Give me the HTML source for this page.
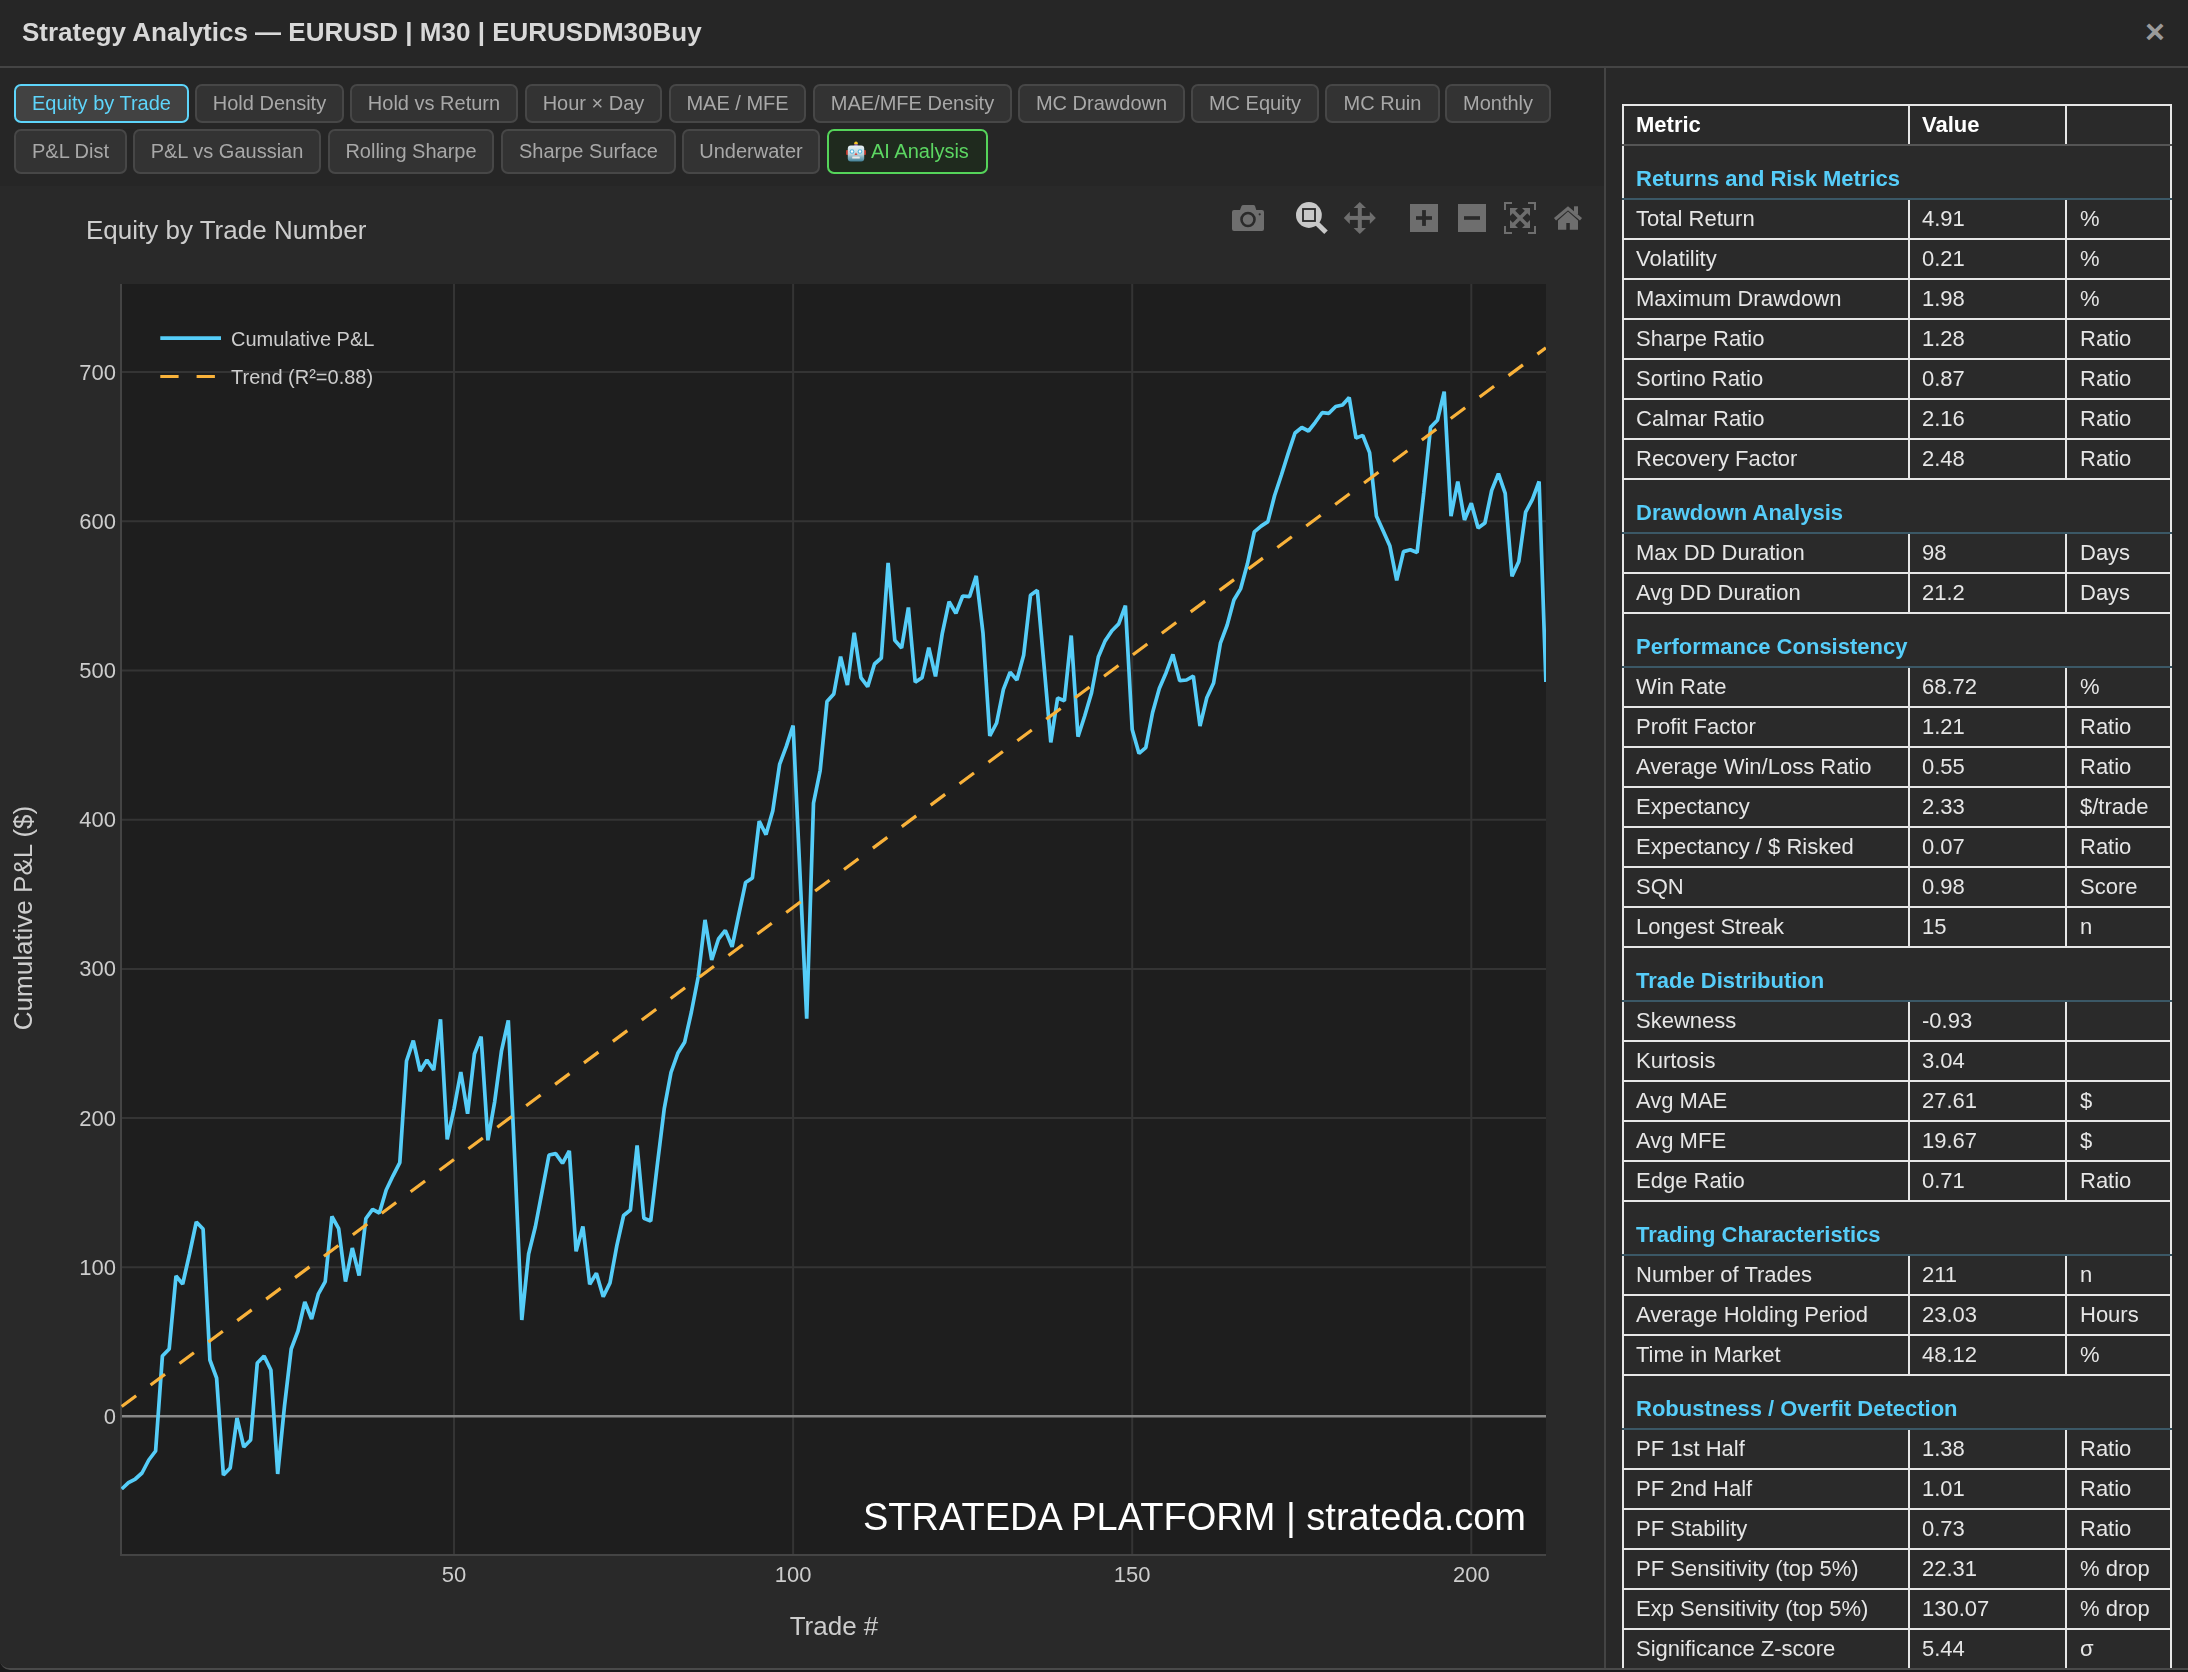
<!DOCTYPE html><html><head><meta charset="utf-8"><style>
*{margin:0;padding:0;box-sizing:border-box}
html,body{width:2188px;height:1672px;overflow:hidden;background:#1a1a1a;font-family:"Liberation Sans", sans-serif}
.modal{position:absolute;left:0;top:0;width:2188px;height:1670px;background:#262626;border-radius:0 0 0 10px;border-bottom:2px solid #4a4a4a;overflow:hidden}
.hdr{position:absolute;left:0;top:0;width:2188px;height:66px;background:#262626}
.hdr .t{will-change:transform;position:absolute;left:22px;top:17px;font-size:26px;font-weight:bold;color:#d8d8d8;white-space:nowrap;line-height:30px}
.hdr .x{position:absolute;left:2143px;top:16px;width:24px;height:30px;color:#9a9a9a;font-size:34px;line-height:30px;font-weight:bold;text-align:center}
.hline{position:absolute;left:0;top:66px;width:2188px;height:2px;background:#444}
.vline{position:absolute;left:1604px;top:68px;width:2px;height:1610px;background:#444}
.tab{will-change:transform;position:absolute;height:39px;border:2px solid #474747;border-radius:7px;background:#333;color:#a8a8a8;font-size:20px;line-height:35px;text-align:center;white-space:nowrap}
.tab.r2{height:45px;line-height:41px}
.tab.act{border-color:#5ed5fb;background:#424242;color:#5ed5fb}
.tab.ai{border-color:#55d45a;background:#1f2a1e;color:#5cd662}
.paper{position:absolute;left:0;top:186px;width:1604px;height:1483px;background:#292929}
.abs{position:absolute;white-space:nowrap;will-change:transform}
</style></head><body><div class="modal">
<div class="hdr"><div class="t">Strategy Analytics — EURUSD | M30 | EURUSDM30Buy</div><div class="x">×</div></div>
<div class="hline"></div><div class="vline"></div>
<div class="tab act" style="left:14px;top:84px;width:175px">Equity by Trade</div>
<div class="tab" style="left:195px;top:84px;width:149px">Hold Density</div>
<div class="tab" style="left:350px;top:84px;width:168px">Hold vs Return</div>
<div class="tab" style="left:525px;top:84px;width:137px">Hour × Day</div>
<div class="tab" style="left:669px;top:84px;width:137px">MAE / MFE</div>
<div class="tab" style="left:813px;top:84px;width:199px">MAE/MFE Density</div>
<div class="tab" style="left:1018px;top:84px;width:167px">MC Drawdown</div>
<div class="tab" style="left:1191px;top:84px;width:128px">MC Equity</div>
<div class="tab" style="left:1325px;top:84px;width:115px">MC Ruin</div>
<div class="tab" style="left:1445px;top:84px;width:106px">Monthly</div>
<div class="tab r2" style="left:14px;top:129px;width:113px">P&amp;L Dist</div>
<div class="tab r2" style="left:133px;top:129px;width:188px">P&amp;L vs Gaussian</div>
<div class="tab r2" style="left:328px;top:129px;width:166px">Rolling Sharpe</div>
<div class="tab r2" style="left:501px;top:129px;width:175px">Sharpe Surface</div>
<div class="tab r2" style="left:682px;top:129px;width:138px">Underwater</div>
<div class="tab r2 ai" style="left:827px;top:129px;width:161px;text-align:left;padding-left:42px"><svg width="20" height="21" viewBox="0 0 20 21" style="position:absolute;left:17px;top:10px"><circle cx="10" cy="2.2" r="1.8" fill="#f3c623"/><rect x="8.3" y="3.3" width="3.4" height="2.2" fill="#7a4fb0"/><rect x="0" y="9" width="2.5" height="5" rx="1" fill="#c0392b"/><rect x="17.5" y="9" width="2.5" height="5" rx="1" fill="#c0392b"/><defs><linearGradient id="rg" x1="0" y1="0" x2="0" y2="1"><stop offset="0" stop-color="#e8f2f5"/><stop offset="0.55" stop-color="#b7d3dc"/><stop offset="1" stop-color="#3f7f96"/></linearGradient></defs><rect x="1.8" y="4.5" width="16.4" height="16" rx="3" fill="url(#rg)"/><circle cx="6" cy="10.5" r="2.3" fill="#57b9e0"/><circle cx="14" cy="10.5" r="2.3" fill="#57b9e0"/><circle cx="6" cy="10.5" r="1.2" fill="#fff"/><circle cx="14" cy="10.5" r="1.2" fill="#fff"/><path d="M10 11.5 L11.5 14 L8.5 14Z" fill="#e0463a"/><rect x="6.2" y="15.5" width="7.6" height="2" rx="0.6" fill="#e8e8e8"/></svg>AI Analysis</div>
<div class="paper"></div>
<svg class="abs" style="left:0;top:0" width="1604" height="1669" viewBox="0 0 1604 1669"><rect x="121" y="284" width="1425" height="1270" fill="#1e1e1e"/><line x1="121" x2="1546" y1="1267.3" y2="1267.3" stroke="#343434" stroke-width="2"/><line x1="121" x2="1546" y1="1118.1" y2="1118.1" stroke="#343434" stroke-width="2"/><line x1="121" x2="1546" y1="968.9" y2="968.9" stroke="#343434" stroke-width="2"/><line x1="121" x2="1546" y1="819.7" y2="819.7" stroke="#343434" stroke-width="2"/><line x1="121" x2="1546" y1="670.5" y2="670.5" stroke="#343434" stroke-width="2"/><line x1="121" x2="1546" y1="521.2" y2="521.2" stroke="#343434" stroke-width="2"/><line x1="121" x2="1546" y1="372.0" y2="372.0" stroke="#343434" stroke-width="2"/><line x1="454.0" x2="454.0" y1="284" y2="1554" stroke="#343434" stroke-width="2"/><line x1="793.1" x2="793.1" y1="284" y2="1554" stroke="#343434" stroke-width="2"/><line x1="1132.2" x2="1132.2" y1="284" y2="1554" stroke="#343434" stroke-width="2"/><line x1="1471.3" x2="1471.3" y1="284" y2="1554" stroke="#343434" stroke-width="2"/><line x1="121" x2="1546" y1="1416.3" y2="1416.3" stroke="#888" stroke-width="2.6"/><line x1="121" x2="121" y1="284" y2="1555" stroke="#444" stroke-width="2"/><line x1="120" x2="1546" y1="1555" y2="1555" stroke="#444" stroke-width="2"/><defs><clipPath id="pc"><rect x="121" y="284" width="1425" height="1270"/></clipPath></defs><g clip-path="url(#pc)"><path d="M121.7 1489.0 L128.5 1482.7 L135.3 1479.0 L142.0 1473.0 L148.8 1460.0 L155.6 1451.0 L162.4 1356.0 L169.2 1349.0 L176.0 1276.0 L182.7 1284.0 L189.5 1254.0 L196.3 1222.0 L203.1 1229.0 L209.9 1360.0 L216.6 1378.0 L223.4 1475.0 L230.2 1468.0 L237.0 1418.0 L243.8 1447.0 L250.6 1440.0 L257.3 1363.0 L264.1 1356.0 L270.9 1370.0 L277.7 1474.0 L284.5 1406.0 L291.2 1349.0 L298.0 1331.0 L304.8 1302.0 L311.6 1319.0 L318.4 1293.8 L325.2 1281.6 L331.9 1216.5 L338.7 1228.7 L345.5 1281.6 L352.3 1248.0 L359.1 1275.5 L365.9 1218.5 L372.6 1209.4 L379.4 1213.0 L386.2 1190.0 L393.0 1175.8 L399.8 1162.6 L406.5 1061.0 L413.3 1040.7 L420.1 1071.0 L426.9 1060.0 L433.7 1070.0 L440.5 1019.3 L447.2 1139.3 L454.0 1108.8 L460.8 1072.0 L467.6 1113.8 L474.4 1054.0 L481.1 1036.6 L487.9 1140.3 L494.7 1101.6 L501.5 1050.8 L508.3 1020.3 L515.1 1167.0 L521.8 1320.0 L528.6 1254.0 L535.4 1226.5 L542.2 1190.8 L549.0 1155.0 L555.7 1153.6 L562.5 1163.3 L569.3 1150.9 L576.1 1251.3 L582.9 1226.5 L589.7 1284.3 L596.4 1273.3 L603.2 1296.7 L610.0 1282.9 L616.8 1245.8 L623.6 1215.5 L630.4 1210.0 L637.1 1145.4 L643.9 1218.3 L650.7 1221.0 L657.5 1163.3 L664.3 1108.3 L671.0 1072.5 L677.8 1053.3 L684.6 1042.3 L691.4 1012.0 L698.2 977.0 L705.0 919.9 L711.7 960.0 L718.5 939.0 L725.3 930.4 L732.1 946.8 L738.9 914.0 L745.6 882.5 L752.4 878.0 L759.2 821.2 L766.0 834.6 L772.8 810.7 L779.6 764.4 L786.3 746.4 L793.1 725.5 L799.9 872.0 L806.7 1018.6 L813.5 803.2 L820.2 770.3 L827.0 701.5 L833.8 694.0 L840.6 656.7 L847.4 685.1 L854.2 632.7 L860.9 677.6 L867.7 686.6 L874.5 664.0 L881.3 658.0 L888.1 563.0 L894.8 640.3 L901.6 648.0 L908.4 607.5 L915.2 682.1 L922.0 677.8 L928.8 647.7 L935.5 676.4 L942.3 633.3 L949.1 601.7 L955.9 613.2 L962.7 596.0 L969.5 596.7 L976.2 575.9 L983.0 633.3 L989.8 736.0 L996.6 723.0 L1003.4 689.3 L1010.1 672.1 L1016.9 680.0 L1023.7 654.9 L1030.5 595.3 L1037.3 590.3 L1044.1 666.3 L1050.8 742.4 L1057.6 698.0 L1064.4 700.8 L1071.2 635.5 L1078.0 736.7 L1084.7 716.0 L1091.5 693.0 L1098.3 657.0 L1105.1 640.9 L1111.9 630.7 L1118.7 623.9 L1125.4 605.7 L1132.2 729.5 L1139.0 753.4 L1145.8 747.7 L1152.6 712.5 L1159.3 688.6 L1166.1 672.7 L1172.9 654.5 L1179.7 680.7 L1186.5 680.0 L1193.3 676.1 L1200.0 726.1 L1206.8 697.7 L1213.6 683.0 L1220.4 643.2 L1227.2 625.0 L1233.9 600.0 L1240.7 588.6 L1247.5 563.6 L1254.3 531.8 L1261.1 526.1 L1267.9 521.6 L1274.6 495.5 L1281.4 475.0 L1288.2 453.4 L1295.0 433.0 L1301.8 427.5 L1308.5 431.0 L1315.3 422.3 L1322.1 412.7 L1328.9 413.3 L1335.7 406.5 L1342.5 405.0 L1349.2 397.5 L1356.0 438.1 L1362.8 435.4 L1369.6 452.6 L1376.4 515.9 L1383.2 531.0 L1389.9 546.1 L1396.7 580.4 L1403.5 551.6 L1410.3 549.7 L1417.1 552.5 L1423.8 492.4 L1430.6 427.3 L1437.4 420.3 L1444.2 391.7 L1451.0 516.1 L1457.8 481.5 L1464.5 520.0 L1471.3 503.3 L1478.1 528.0 L1484.9 523.0 L1491.7 490.4 L1498.4 473.7 L1505.2 493.4 L1512.0 576.3 L1518.8 561.5 L1525.6 512.2 L1532.4 499.3 L1539.1 481.5 L1545.9 682.0" fill="none" stroke="#55cdf8" stroke-width="3.7" stroke-linejoin="bevel"/><line x1="121.7" y1="1406.5" x2="1545.9" y2="347.8" stroke="#f9b23a" stroke-width="3.2" stroke-dasharray="18 18"/></g><text x="116" y="1424.0" text-anchor="end" font-size="22" fill="#cdcdcd" font-family='"Liberation Sans", sans-serif'>0</text><text x="116" y="1274.8" text-anchor="end" font-size="22" fill="#cdcdcd" font-family='"Liberation Sans", sans-serif'>100</text><text x="116" y="1125.6" text-anchor="end" font-size="22" fill="#cdcdcd" font-family='"Liberation Sans", sans-serif'>200</text><text x="116" y="976.4" text-anchor="end" font-size="22" fill="#cdcdcd" font-family='"Liberation Sans", sans-serif'>300</text><text x="116" y="827.2" text-anchor="end" font-size="22" fill="#cdcdcd" font-family='"Liberation Sans", sans-serif'>400</text><text x="116" y="678.0" text-anchor="end" font-size="22" fill="#cdcdcd" font-family='"Liberation Sans", sans-serif'>500</text><text x="116" y="528.7" text-anchor="end" font-size="22" fill="#cdcdcd" font-family='"Liberation Sans", sans-serif'>600</text><text x="116" y="379.5" text-anchor="end" font-size="22" fill="#cdcdcd" font-family='"Liberation Sans", sans-serif'>700</text><text x="454.0" y="1581.5" text-anchor="middle" font-size="22" fill="#cdcdcd" font-family='"Liberation Sans", sans-serif'>50</text><text x="793.1" y="1581.5" text-anchor="middle" font-size="22" fill="#cdcdcd" font-family='"Liberation Sans", sans-serif'>100</text><text x="1132.2" y="1581.5" text-anchor="middle" font-size="22" fill="#cdcdcd" font-family='"Liberation Sans", sans-serif'>150</text><text x="1471.3" y="1581.5" text-anchor="middle" font-size="22" fill="#cdcdcd" font-family='"Liberation Sans", sans-serif'>200</text><text x="834" y="1635" text-anchor="middle" font-size="26" fill="#cdcdcd" font-family='"Liberation Sans", sans-serif'>Trade #</text><text transform="translate(32 918) rotate(-90)" text-anchor="middle" font-size="26" fill="#cdcdcd" font-family='"Liberation Sans", sans-serif'>Cumulative P&amp;L ($)</text><text x="86" y="239" font-size="26" fill="#cdcdcd" font-family='"Liberation Sans", sans-serif'>Equity by Trade Number</text><line x1="160.3" x2="221" y1="338.2" y2="338.2" stroke="#55cdf8" stroke-width="3.7" stroke-linejoin="bevel"/><line x1="160.3" x2="221" y1="376.5" y2="376.5" stroke="#f9b23a" stroke-width="3.2" stroke-dasharray="18.3 18"/><text x="231" y="346" font-size="20" fill="#cdcdcd" font-family='"Liberation Sans", sans-serif'>Cumulative P&amp;L</text><text x="231" y="384" font-size="20" fill="#cdcdcd" font-family='"Liberation Sans", sans-serif'>Trend (R²=0.88)</text><text x="1526" y="1530" text-anchor="end" font-size="38" fill="#ffffff" font-family='"Liberation Sans", sans-serif'>STRATEDA PLATFORM | strateda.com</text><g fill="#6e6e6e"><path d="M1241.5 206 Q1242 205 1243.5 205 L1253.5 205 Q1254.5 205 1255 206 L1256.3 210 L1262 210 Q1264 210 1264 212 L1264 229 Q1264 231 1262 231 L1234 231 Q1232 231 1232 229 L1232 212 Q1232 210 1234 210 L1240 210 Z"/></g><circle cx="1248" cy="219.5" r="6.5" fill="none" stroke="#2a2a2a" stroke-width="2.6"/><circle cx="1259.7" cy="214.3" r="1.1" fill="#2a2a2a"/><circle cx="1308.9" cy="215" r="12.9" fill="#c8c8c8"/><line x1="1316" y1="222.5" x2="1326" y2="232.2" stroke="#c8c8c8" stroke-width="5"/><rect x="1303" y="209" width="12" height="12" fill="#c8c8c8" stroke="#262626" stroke-width="1.8"/><g fill="#6e6e6e"><rect x="1357.8" y="206" width="4" height="24"/><rect x="1348" y="215.9" width="24" height="4"/><path d="M1359.8 202 L1366 208 L1353.6 208 Z"/><path d="M1359.8 234 L1366 228 L1353.6 228 Z"/><path d="M1343.8 217.9 L1349.8 211.7 L1349.8 224.1 Z"/><path d="M1375.8 217.9 L1369.8 211.7 L1369.8 224.1 Z"/></g><rect x="1410" y="204" width="28" height="28" fill="#6e6e6e"/><rect x="1416" y="216.2" width="16" height="3.6" fill="#2a2a2a"/><rect x="1422.1" y="210.1" width="3.8" height="15.8" fill="#2a2a2a"/><rect x="1458" y="204" width="28" height="28" fill="#6e6e6e"/><rect x="1464" y="216.2" width="16" height="3.6" fill="#2a2a2a"/><path d="M1505 210 L1505 203 L1512 203 M1528 203 L1535 203 L1535 210 M1535 226 L1535 233 L1528 233 M1512 233 L1505 233 L1505 226" fill="none" stroke="#6e6e6e" stroke-width="2"/><g fill="#6e6e6e"><path d="M1510 208 L1518 208 L1510 216Z"/><path d="M1530 208 L1522 208 L1530 216Z"/><path d="M1510 228 L1518 228 L1510 220Z"/><path d="M1530 228 L1522 228 L1530 220Z"/></g><path d="M1512 210 L1528 226 M1528 210 L1512 226" stroke="#6e6e6e" stroke-width="3.4"/><path d="M1555 219.3 L1568 208.3 L1581 219.3" fill="none" stroke="#6e6e6e" stroke-width="3.2" stroke-linejoin="miter"/><rect x="1574" y="206.3" width="4" height="8" fill="#6e6e6e"/><path d="M1558 220.5 L1568 211.5 L1578 220.5 L1578 229.7 L1569.8 229.7 L1569.8 223 L1566.3 223 L1566.3 229.7 L1558 229.7Z" fill="#6e6e6e"/></svg>
<div class="abs" style="left:1606px;top:68px;width:582px;height:1601px;background:#282828"></div><div class="abs" style="left:1622px;top:104px;width:550px;height:1570px;background:#2a2a2a"></div><div class="abs" style="left:1622px;top:104px;width:550px;height:2px;background:#e6e6e6"></div><div class="abs" style="left:1622px;top:104px;width:2px;height:40px;background:#e6e6e6"></div><div class="abs" style="left:1908px;top:104px;width:2px;height:40px;background:#e6e6e6"></div><div class="abs" style="left:2065px;top:104px;width:2px;height:40px;background:#e6e6e6"></div><div class="abs" style="left:2170px;top:104px;width:2px;height:40px;background:#e6e6e6"></div><div class="abs" style="left:1622px;top:144px;width:550px;height:2px;background:#555"></div><div class="abs" style="left:1636px;top:110px;height:30px;line-height:30px;font-size:22px;color:#ffffff;font-weight:bold">Metric</div><div class="abs" style="left:1922px;top:110px;height:30px;line-height:30px;font-size:22px;color:#ffffff;font-weight:bold">Value</div><div class="abs" style="left:1622px;top:146px;width:2px;height:52px;background:#e6e6e6"></div><div class="abs" style="left:2170px;top:146px;width:2px;height:52px;background:#e6e6e6"></div><div class="abs" style="left:1636px;top:164px;height:30px;line-height:30px;font-size:22px;color:#56cdf9;font-weight:bold">Returns and Risk Metrics</div><div class="abs" style="left:1622px;top:198px;width:550px;height:2px;background:#3b5866"></div><div class="abs" style="left:1622px;top:200px;width:2px;height:38px;background:#e6e6e6"></div><div class="abs" style="left:1908px;top:200px;width:2px;height:38px;background:#e6e6e6"></div><div class="abs" style="left:2065px;top:200px;width:2px;height:38px;background:#e6e6e6"></div><div class="abs" style="left:2170px;top:200px;width:2px;height:38px;background:#e6e6e6"></div><div class="abs" style="left:1636px;top:204px;height:30px;line-height:30px;font-size:22px;color:#e6e6e6;font-weight:normal">Total Return</div><div class="abs" style="left:1922px;top:204px;height:30px;line-height:30px;font-size:22px;color:#e6e6e6;font-weight:normal">4.91</div><div class="abs" style="left:2080px;top:204px;height:30px;line-height:30px;font-size:22px;color:#e6e6e6;font-weight:normal">%</div><div class="abs" style="left:1622px;top:238px;width:550px;height:2px;background:#e6e6e6"></div><div class="abs" style="left:1622px;top:240px;width:2px;height:38px;background:#e6e6e6"></div><div class="abs" style="left:1908px;top:240px;width:2px;height:38px;background:#e6e6e6"></div><div class="abs" style="left:2065px;top:240px;width:2px;height:38px;background:#e6e6e6"></div><div class="abs" style="left:2170px;top:240px;width:2px;height:38px;background:#e6e6e6"></div><div class="abs" style="left:1636px;top:244px;height:30px;line-height:30px;font-size:22px;color:#e6e6e6;font-weight:normal">Volatility</div><div class="abs" style="left:1922px;top:244px;height:30px;line-height:30px;font-size:22px;color:#e6e6e6;font-weight:normal">0.21</div><div class="abs" style="left:2080px;top:244px;height:30px;line-height:30px;font-size:22px;color:#e6e6e6;font-weight:normal">%</div><div class="abs" style="left:1622px;top:278px;width:550px;height:2px;background:#e6e6e6"></div><div class="abs" style="left:1622px;top:280px;width:2px;height:38px;background:#e6e6e6"></div><div class="abs" style="left:1908px;top:280px;width:2px;height:38px;background:#e6e6e6"></div><div class="abs" style="left:2065px;top:280px;width:2px;height:38px;background:#e6e6e6"></div><div class="abs" style="left:2170px;top:280px;width:2px;height:38px;background:#e6e6e6"></div><div class="abs" style="left:1636px;top:284px;height:30px;line-height:30px;font-size:22px;color:#e6e6e6;font-weight:normal">Maximum Drawdown</div><div class="abs" style="left:1922px;top:284px;height:30px;line-height:30px;font-size:22px;color:#e6e6e6;font-weight:normal">1.98</div><div class="abs" style="left:2080px;top:284px;height:30px;line-height:30px;font-size:22px;color:#e6e6e6;font-weight:normal">%</div><div class="abs" style="left:1622px;top:318px;width:550px;height:2px;background:#e6e6e6"></div><div class="abs" style="left:1622px;top:320px;width:2px;height:38px;background:#e6e6e6"></div><div class="abs" style="left:1908px;top:320px;width:2px;height:38px;background:#e6e6e6"></div><div class="abs" style="left:2065px;top:320px;width:2px;height:38px;background:#e6e6e6"></div><div class="abs" style="left:2170px;top:320px;width:2px;height:38px;background:#e6e6e6"></div><div class="abs" style="left:1636px;top:324px;height:30px;line-height:30px;font-size:22px;color:#e6e6e6;font-weight:normal">Sharpe Ratio</div><div class="abs" style="left:1922px;top:324px;height:30px;line-height:30px;font-size:22px;color:#e6e6e6;font-weight:normal">1.28</div><div class="abs" style="left:2080px;top:324px;height:30px;line-height:30px;font-size:22px;color:#e6e6e6;font-weight:normal">Ratio</div><div class="abs" style="left:1622px;top:358px;width:550px;height:2px;background:#e6e6e6"></div><div class="abs" style="left:1622px;top:360px;width:2px;height:38px;background:#e6e6e6"></div><div class="abs" style="left:1908px;top:360px;width:2px;height:38px;background:#e6e6e6"></div><div class="abs" style="left:2065px;top:360px;width:2px;height:38px;background:#e6e6e6"></div><div class="abs" style="left:2170px;top:360px;width:2px;height:38px;background:#e6e6e6"></div><div class="abs" style="left:1636px;top:364px;height:30px;line-height:30px;font-size:22px;color:#e6e6e6;font-weight:normal">Sortino Ratio</div><div class="abs" style="left:1922px;top:364px;height:30px;line-height:30px;font-size:22px;color:#e6e6e6;font-weight:normal">0.87</div><div class="abs" style="left:2080px;top:364px;height:30px;line-height:30px;font-size:22px;color:#e6e6e6;font-weight:normal">Ratio</div><div class="abs" style="left:1622px;top:398px;width:550px;height:2px;background:#e6e6e6"></div><div class="abs" style="left:1622px;top:400px;width:2px;height:38px;background:#e6e6e6"></div><div class="abs" style="left:1908px;top:400px;width:2px;height:38px;background:#e6e6e6"></div><div class="abs" style="left:2065px;top:400px;width:2px;height:38px;background:#e6e6e6"></div><div class="abs" style="left:2170px;top:400px;width:2px;height:38px;background:#e6e6e6"></div><div class="abs" style="left:1636px;top:404px;height:30px;line-height:30px;font-size:22px;color:#e6e6e6;font-weight:normal">Calmar Ratio</div><div class="abs" style="left:1922px;top:404px;height:30px;line-height:30px;font-size:22px;color:#e6e6e6;font-weight:normal">2.16</div><div class="abs" style="left:2080px;top:404px;height:30px;line-height:30px;font-size:22px;color:#e6e6e6;font-weight:normal">Ratio</div><div class="abs" style="left:1622px;top:438px;width:550px;height:2px;background:#e6e6e6"></div><div class="abs" style="left:1622px;top:440px;width:2px;height:38px;background:#e6e6e6"></div><div class="abs" style="left:1908px;top:440px;width:2px;height:38px;background:#e6e6e6"></div><div class="abs" style="left:2065px;top:440px;width:2px;height:38px;background:#e6e6e6"></div><div class="abs" style="left:2170px;top:440px;width:2px;height:38px;background:#e6e6e6"></div><div class="abs" style="left:1636px;top:444px;height:30px;line-height:30px;font-size:22px;color:#e6e6e6;font-weight:normal">Recovery Factor</div><div class="abs" style="left:1922px;top:444px;height:30px;line-height:30px;font-size:22px;color:#e6e6e6;font-weight:normal">2.48</div><div class="abs" style="left:2080px;top:444px;height:30px;line-height:30px;font-size:22px;color:#e6e6e6;font-weight:normal">Ratio</div><div class="abs" style="left:1622px;top:478px;width:550px;height:2px;background:#e6e6e6"></div><div class="abs" style="left:1622px;top:480px;width:2px;height:52px;background:#e6e6e6"></div><div class="abs" style="left:2170px;top:480px;width:2px;height:52px;background:#e6e6e6"></div><div class="abs" style="left:1636px;top:498px;height:30px;line-height:30px;font-size:22px;color:#56cdf9;font-weight:bold">Drawdown Analysis</div><div class="abs" style="left:1622px;top:532px;width:550px;height:2px;background:#3b5866"></div><div class="abs" style="left:1622px;top:534px;width:2px;height:38px;background:#e6e6e6"></div><div class="abs" style="left:1908px;top:534px;width:2px;height:38px;background:#e6e6e6"></div><div class="abs" style="left:2065px;top:534px;width:2px;height:38px;background:#e6e6e6"></div><div class="abs" style="left:2170px;top:534px;width:2px;height:38px;background:#e6e6e6"></div><div class="abs" style="left:1636px;top:538px;height:30px;line-height:30px;font-size:22px;color:#e6e6e6;font-weight:normal">Max DD Duration</div><div class="abs" style="left:1922px;top:538px;height:30px;line-height:30px;font-size:22px;color:#e6e6e6;font-weight:normal">98</div><div class="abs" style="left:2080px;top:538px;height:30px;line-height:30px;font-size:22px;color:#e6e6e6;font-weight:normal">Days</div><div class="abs" style="left:1622px;top:572px;width:550px;height:2px;background:#e6e6e6"></div><div class="abs" style="left:1622px;top:574px;width:2px;height:38px;background:#e6e6e6"></div><div class="abs" style="left:1908px;top:574px;width:2px;height:38px;background:#e6e6e6"></div><div class="abs" style="left:2065px;top:574px;width:2px;height:38px;background:#e6e6e6"></div><div class="abs" style="left:2170px;top:574px;width:2px;height:38px;background:#e6e6e6"></div><div class="abs" style="left:1636px;top:578px;height:30px;line-height:30px;font-size:22px;color:#e6e6e6;font-weight:normal">Avg DD Duration</div><div class="abs" style="left:1922px;top:578px;height:30px;line-height:30px;font-size:22px;color:#e6e6e6;font-weight:normal">21.2</div><div class="abs" style="left:2080px;top:578px;height:30px;line-height:30px;font-size:22px;color:#e6e6e6;font-weight:normal">Days</div><div class="abs" style="left:1622px;top:612px;width:550px;height:2px;background:#e6e6e6"></div><div class="abs" style="left:1622px;top:614px;width:2px;height:52px;background:#e6e6e6"></div><div class="abs" style="left:2170px;top:614px;width:2px;height:52px;background:#e6e6e6"></div><div class="abs" style="left:1636px;top:632px;height:30px;line-height:30px;font-size:22px;color:#56cdf9;font-weight:bold">Performance Consistency</div><div class="abs" style="left:1622px;top:666px;width:550px;height:2px;background:#3b5866"></div><div class="abs" style="left:1622px;top:668px;width:2px;height:38px;background:#e6e6e6"></div><div class="abs" style="left:1908px;top:668px;width:2px;height:38px;background:#e6e6e6"></div><div class="abs" style="left:2065px;top:668px;width:2px;height:38px;background:#e6e6e6"></div><div class="abs" style="left:2170px;top:668px;width:2px;height:38px;background:#e6e6e6"></div><div class="abs" style="left:1636px;top:672px;height:30px;line-height:30px;font-size:22px;color:#e6e6e6;font-weight:normal">Win Rate</div><div class="abs" style="left:1922px;top:672px;height:30px;line-height:30px;font-size:22px;color:#e6e6e6;font-weight:normal">68.72</div><div class="abs" style="left:2080px;top:672px;height:30px;line-height:30px;font-size:22px;color:#e6e6e6;font-weight:normal">%</div><div class="abs" style="left:1622px;top:706px;width:550px;height:2px;background:#e6e6e6"></div><div class="abs" style="left:1622px;top:708px;width:2px;height:38px;background:#e6e6e6"></div><div class="abs" style="left:1908px;top:708px;width:2px;height:38px;background:#e6e6e6"></div><div class="abs" style="left:2065px;top:708px;width:2px;height:38px;background:#e6e6e6"></div><div class="abs" style="left:2170px;top:708px;width:2px;height:38px;background:#e6e6e6"></div><div class="abs" style="left:1636px;top:712px;height:30px;line-height:30px;font-size:22px;color:#e6e6e6;font-weight:normal">Profit Factor</div><div class="abs" style="left:1922px;top:712px;height:30px;line-height:30px;font-size:22px;color:#e6e6e6;font-weight:normal">1.21</div><div class="abs" style="left:2080px;top:712px;height:30px;line-height:30px;font-size:22px;color:#e6e6e6;font-weight:normal">Ratio</div><div class="abs" style="left:1622px;top:746px;width:550px;height:2px;background:#e6e6e6"></div><div class="abs" style="left:1622px;top:748px;width:2px;height:38px;background:#e6e6e6"></div><div class="abs" style="left:1908px;top:748px;width:2px;height:38px;background:#e6e6e6"></div><div class="abs" style="left:2065px;top:748px;width:2px;height:38px;background:#e6e6e6"></div><div class="abs" style="left:2170px;top:748px;width:2px;height:38px;background:#e6e6e6"></div><div class="abs" style="left:1636px;top:752px;height:30px;line-height:30px;font-size:22px;color:#e6e6e6;font-weight:normal">Average Win/Loss Ratio</div><div class="abs" style="left:1922px;top:752px;height:30px;line-height:30px;font-size:22px;color:#e6e6e6;font-weight:normal">0.55</div><div class="abs" style="left:2080px;top:752px;height:30px;line-height:30px;font-size:22px;color:#e6e6e6;font-weight:normal">Ratio</div><div class="abs" style="left:1622px;top:786px;width:550px;height:2px;background:#e6e6e6"></div><div class="abs" style="left:1622px;top:788px;width:2px;height:38px;background:#e6e6e6"></div><div class="abs" style="left:1908px;top:788px;width:2px;height:38px;background:#e6e6e6"></div><div class="abs" style="left:2065px;top:788px;width:2px;height:38px;background:#e6e6e6"></div><div class="abs" style="left:2170px;top:788px;width:2px;height:38px;background:#e6e6e6"></div><div class="abs" style="left:1636px;top:792px;height:30px;line-height:30px;font-size:22px;color:#e6e6e6;font-weight:normal">Expectancy</div><div class="abs" style="left:1922px;top:792px;height:30px;line-height:30px;font-size:22px;color:#e6e6e6;font-weight:normal">2.33</div><div class="abs" style="left:2080px;top:792px;height:30px;line-height:30px;font-size:22px;color:#e6e6e6;font-weight:normal">$/trade</div><div class="abs" style="left:1622px;top:826px;width:550px;height:2px;background:#e6e6e6"></div><div class="abs" style="left:1622px;top:828px;width:2px;height:38px;background:#e6e6e6"></div><div class="abs" style="left:1908px;top:828px;width:2px;height:38px;background:#e6e6e6"></div><div class="abs" style="left:2065px;top:828px;width:2px;height:38px;background:#e6e6e6"></div><div class="abs" style="left:2170px;top:828px;width:2px;height:38px;background:#e6e6e6"></div><div class="abs" style="left:1636px;top:832px;height:30px;line-height:30px;font-size:22px;color:#e6e6e6;font-weight:normal">Expectancy / $ Risked</div><div class="abs" style="left:1922px;top:832px;height:30px;line-height:30px;font-size:22px;color:#e6e6e6;font-weight:normal">0.07</div><div class="abs" style="left:2080px;top:832px;height:30px;line-height:30px;font-size:22px;color:#e6e6e6;font-weight:normal">Ratio</div><div class="abs" style="left:1622px;top:866px;width:550px;height:2px;background:#e6e6e6"></div><div class="abs" style="left:1622px;top:868px;width:2px;height:38px;background:#e6e6e6"></div><div class="abs" style="left:1908px;top:868px;width:2px;height:38px;background:#e6e6e6"></div><div class="abs" style="left:2065px;top:868px;width:2px;height:38px;background:#e6e6e6"></div><div class="abs" style="left:2170px;top:868px;width:2px;height:38px;background:#e6e6e6"></div><div class="abs" style="left:1636px;top:872px;height:30px;line-height:30px;font-size:22px;color:#e6e6e6;font-weight:normal">SQN</div><div class="abs" style="left:1922px;top:872px;height:30px;line-height:30px;font-size:22px;color:#e6e6e6;font-weight:normal">0.98</div><div class="abs" style="left:2080px;top:872px;height:30px;line-height:30px;font-size:22px;color:#e6e6e6;font-weight:normal">Score</div><div class="abs" style="left:1622px;top:906px;width:550px;height:2px;background:#e6e6e6"></div><div class="abs" style="left:1622px;top:908px;width:2px;height:38px;background:#e6e6e6"></div><div class="abs" style="left:1908px;top:908px;width:2px;height:38px;background:#e6e6e6"></div><div class="abs" style="left:2065px;top:908px;width:2px;height:38px;background:#e6e6e6"></div><div class="abs" style="left:2170px;top:908px;width:2px;height:38px;background:#e6e6e6"></div><div class="abs" style="left:1636px;top:912px;height:30px;line-height:30px;font-size:22px;color:#e6e6e6;font-weight:normal">Longest Streak</div><div class="abs" style="left:1922px;top:912px;height:30px;line-height:30px;font-size:22px;color:#e6e6e6;font-weight:normal">15</div><div class="abs" style="left:2080px;top:912px;height:30px;line-height:30px;font-size:22px;color:#e6e6e6;font-weight:normal">n</div><div class="abs" style="left:1622px;top:946px;width:550px;height:2px;background:#e6e6e6"></div><div class="abs" style="left:1622px;top:948px;width:2px;height:52px;background:#e6e6e6"></div><div class="abs" style="left:2170px;top:948px;width:2px;height:52px;background:#e6e6e6"></div><div class="abs" style="left:1636px;top:966px;height:30px;line-height:30px;font-size:22px;color:#56cdf9;font-weight:bold">Trade Distribution</div><div class="abs" style="left:1622px;top:1000px;width:550px;height:2px;background:#3b5866"></div><div class="abs" style="left:1622px;top:1002px;width:2px;height:38px;background:#e6e6e6"></div><div class="abs" style="left:1908px;top:1002px;width:2px;height:38px;background:#e6e6e6"></div><div class="abs" style="left:2065px;top:1002px;width:2px;height:38px;background:#e6e6e6"></div><div class="abs" style="left:2170px;top:1002px;width:2px;height:38px;background:#e6e6e6"></div><div class="abs" style="left:1636px;top:1006px;height:30px;line-height:30px;font-size:22px;color:#e6e6e6;font-weight:normal">Skewness</div><div class="abs" style="left:1922px;top:1006px;height:30px;line-height:30px;font-size:22px;color:#e6e6e6;font-weight:normal">-0.93</div><div class="abs" style="left:2080px;top:1006px;height:30px;line-height:30px;font-size:22px;color:#e6e6e6;font-weight:normal"></div><div class="abs" style="left:1622px;top:1040px;width:550px;height:2px;background:#e6e6e6"></div><div class="abs" style="left:1622px;top:1042px;width:2px;height:38px;background:#e6e6e6"></div><div class="abs" style="left:1908px;top:1042px;width:2px;height:38px;background:#e6e6e6"></div><div class="abs" style="left:2065px;top:1042px;width:2px;height:38px;background:#e6e6e6"></div><div class="abs" style="left:2170px;top:1042px;width:2px;height:38px;background:#e6e6e6"></div><div class="abs" style="left:1636px;top:1046px;height:30px;line-height:30px;font-size:22px;color:#e6e6e6;font-weight:normal">Kurtosis</div><div class="abs" style="left:1922px;top:1046px;height:30px;line-height:30px;font-size:22px;color:#e6e6e6;font-weight:normal">3.04</div><div class="abs" style="left:2080px;top:1046px;height:30px;line-height:30px;font-size:22px;color:#e6e6e6;font-weight:normal"></div><div class="abs" style="left:1622px;top:1080px;width:550px;height:2px;background:#e6e6e6"></div><div class="abs" style="left:1622px;top:1082px;width:2px;height:38px;background:#e6e6e6"></div><div class="abs" style="left:1908px;top:1082px;width:2px;height:38px;background:#e6e6e6"></div><div class="abs" style="left:2065px;top:1082px;width:2px;height:38px;background:#e6e6e6"></div><div class="abs" style="left:2170px;top:1082px;width:2px;height:38px;background:#e6e6e6"></div><div class="abs" style="left:1636px;top:1086px;height:30px;line-height:30px;font-size:22px;color:#e6e6e6;font-weight:normal">Avg MAE</div><div class="abs" style="left:1922px;top:1086px;height:30px;line-height:30px;font-size:22px;color:#e6e6e6;font-weight:normal">27.61</div><div class="abs" style="left:2080px;top:1086px;height:30px;line-height:30px;font-size:22px;color:#e6e6e6;font-weight:normal">$</div><div class="abs" style="left:1622px;top:1120px;width:550px;height:2px;background:#e6e6e6"></div><div class="abs" style="left:1622px;top:1122px;width:2px;height:38px;background:#e6e6e6"></div><div class="abs" style="left:1908px;top:1122px;width:2px;height:38px;background:#e6e6e6"></div><div class="abs" style="left:2065px;top:1122px;width:2px;height:38px;background:#e6e6e6"></div><div class="abs" style="left:2170px;top:1122px;width:2px;height:38px;background:#e6e6e6"></div><div class="abs" style="left:1636px;top:1126px;height:30px;line-height:30px;font-size:22px;color:#e6e6e6;font-weight:normal">Avg MFE</div><div class="abs" style="left:1922px;top:1126px;height:30px;line-height:30px;font-size:22px;color:#e6e6e6;font-weight:normal">19.67</div><div class="abs" style="left:2080px;top:1126px;height:30px;line-height:30px;font-size:22px;color:#e6e6e6;font-weight:normal">$</div><div class="abs" style="left:1622px;top:1160px;width:550px;height:2px;background:#e6e6e6"></div><div class="abs" style="left:1622px;top:1162px;width:2px;height:38px;background:#e6e6e6"></div><div class="abs" style="left:1908px;top:1162px;width:2px;height:38px;background:#e6e6e6"></div><div class="abs" style="left:2065px;top:1162px;width:2px;height:38px;background:#e6e6e6"></div><div class="abs" style="left:2170px;top:1162px;width:2px;height:38px;background:#e6e6e6"></div><div class="abs" style="left:1636px;top:1166px;height:30px;line-height:30px;font-size:22px;color:#e6e6e6;font-weight:normal">Edge Ratio</div><div class="abs" style="left:1922px;top:1166px;height:30px;line-height:30px;font-size:22px;color:#e6e6e6;font-weight:normal">0.71</div><div class="abs" style="left:2080px;top:1166px;height:30px;line-height:30px;font-size:22px;color:#e6e6e6;font-weight:normal">Ratio</div><div class="abs" style="left:1622px;top:1200px;width:550px;height:2px;background:#e6e6e6"></div><div class="abs" style="left:1622px;top:1202px;width:2px;height:52px;background:#e6e6e6"></div><div class="abs" style="left:2170px;top:1202px;width:2px;height:52px;background:#e6e6e6"></div><div class="abs" style="left:1636px;top:1220px;height:30px;line-height:30px;font-size:22px;color:#56cdf9;font-weight:bold">Trading Characteristics</div><div class="abs" style="left:1622px;top:1254px;width:550px;height:2px;background:#3b5866"></div><div class="abs" style="left:1622px;top:1256px;width:2px;height:38px;background:#e6e6e6"></div><div class="abs" style="left:1908px;top:1256px;width:2px;height:38px;background:#e6e6e6"></div><div class="abs" style="left:2065px;top:1256px;width:2px;height:38px;background:#e6e6e6"></div><div class="abs" style="left:2170px;top:1256px;width:2px;height:38px;background:#e6e6e6"></div><div class="abs" style="left:1636px;top:1260px;height:30px;line-height:30px;font-size:22px;color:#e6e6e6;font-weight:normal">Number of Trades</div><div class="abs" style="left:1922px;top:1260px;height:30px;line-height:30px;font-size:22px;color:#e6e6e6;font-weight:normal">211</div><div class="abs" style="left:2080px;top:1260px;height:30px;line-height:30px;font-size:22px;color:#e6e6e6;font-weight:normal">n</div><div class="abs" style="left:1622px;top:1294px;width:550px;height:2px;background:#e6e6e6"></div><div class="abs" style="left:1622px;top:1296px;width:2px;height:38px;background:#e6e6e6"></div><div class="abs" style="left:1908px;top:1296px;width:2px;height:38px;background:#e6e6e6"></div><div class="abs" style="left:2065px;top:1296px;width:2px;height:38px;background:#e6e6e6"></div><div class="abs" style="left:2170px;top:1296px;width:2px;height:38px;background:#e6e6e6"></div><div class="abs" style="left:1636px;top:1300px;height:30px;line-height:30px;font-size:22px;color:#e6e6e6;font-weight:normal">Average Holding Period</div><div class="abs" style="left:1922px;top:1300px;height:30px;line-height:30px;font-size:22px;color:#e6e6e6;font-weight:normal">23.03</div><div class="abs" style="left:2080px;top:1300px;height:30px;line-height:30px;font-size:22px;color:#e6e6e6;font-weight:normal">Hours</div><div class="abs" style="left:1622px;top:1334px;width:550px;height:2px;background:#e6e6e6"></div><div class="abs" style="left:1622px;top:1336px;width:2px;height:38px;background:#e6e6e6"></div><div class="abs" style="left:1908px;top:1336px;width:2px;height:38px;background:#e6e6e6"></div><div class="abs" style="left:2065px;top:1336px;width:2px;height:38px;background:#e6e6e6"></div><div class="abs" style="left:2170px;top:1336px;width:2px;height:38px;background:#e6e6e6"></div><div class="abs" style="left:1636px;top:1340px;height:30px;line-height:30px;font-size:22px;color:#e6e6e6;font-weight:normal">Time in Market</div><div class="abs" style="left:1922px;top:1340px;height:30px;line-height:30px;font-size:22px;color:#e6e6e6;font-weight:normal">48.12</div><div class="abs" style="left:2080px;top:1340px;height:30px;line-height:30px;font-size:22px;color:#e6e6e6;font-weight:normal">%</div><div class="abs" style="left:1622px;top:1374px;width:550px;height:2px;background:#e6e6e6"></div><div class="abs" style="left:1622px;top:1376px;width:2px;height:52px;background:#e6e6e6"></div><div class="abs" style="left:2170px;top:1376px;width:2px;height:52px;background:#e6e6e6"></div><div class="abs" style="left:1636px;top:1394px;height:30px;line-height:30px;font-size:22px;color:#56cdf9;font-weight:bold">Robustness / Overfit Detection</div><div class="abs" style="left:1622px;top:1428px;width:550px;height:2px;background:#3b5866"></div><div class="abs" style="left:1622px;top:1430px;width:2px;height:38px;background:#e6e6e6"></div><div class="abs" style="left:1908px;top:1430px;width:2px;height:38px;background:#e6e6e6"></div><div class="abs" style="left:2065px;top:1430px;width:2px;height:38px;background:#e6e6e6"></div><div class="abs" style="left:2170px;top:1430px;width:2px;height:38px;background:#e6e6e6"></div><div class="abs" style="left:1636px;top:1434px;height:30px;line-height:30px;font-size:22px;color:#e6e6e6;font-weight:normal">PF 1st Half</div><div class="abs" style="left:1922px;top:1434px;height:30px;line-height:30px;font-size:22px;color:#e6e6e6;font-weight:normal">1.38</div><div class="abs" style="left:2080px;top:1434px;height:30px;line-height:30px;font-size:22px;color:#e6e6e6;font-weight:normal">Ratio</div><div class="abs" style="left:1622px;top:1468px;width:550px;height:2px;background:#e6e6e6"></div><div class="abs" style="left:1622px;top:1470px;width:2px;height:38px;background:#e6e6e6"></div><div class="abs" style="left:1908px;top:1470px;width:2px;height:38px;background:#e6e6e6"></div><div class="abs" style="left:2065px;top:1470px;width:2px;height:38px;background:#e6e6e6"></div><div class="abs" style="left:2170px;top:1470px;width:2px;height:38px;background:#e6e6e6"></div><div class="abs" style="left:1636px;top:1474px;height:30px;line-height:30px;font-size:22px;color:#e6e6e6;font-weight:normal">PF 2nd Half</div><div class="abs" style="left:1922px;top:1474px;height:30px;line-height:30px;font-size:22px;color:#e6e6e6;font-weight:normal">1.01</div><div class="abs" style="left:2080px;top:1474px;height:30px;line-height:30px;font-size:22px;color:#e6e6e6;font-weight:normal">Ratio</div><div class="abs" style="left:1622px;top:1508px;width:550px;height:2px;background:#e6e6e6"></div><div class="abs" style="left:1622px;top:1510px;width:2px;height:38px;background:#e6e6e6"></div><div class="abs" style="left:1908px;top:1510px;width:2px;height:38px;background:#e6e6e6"></div><div class="abs" style="left:2065px;top:1510px;width:2px;height:38px;background:#e6e6e6"></div><div class="abs" style="left:2170px;top:1510px;width:2px;height:38px;background:#e6e6e6"></div><div class="abs" style="left:1636px;top:1514px;height:30px;line-height:30px;font-size:22px;color:#e6e6e6;font-weight:normal">PF Stability</div><div class="abs" style="left:1922px;top:1514px;height:30px;line-height:30px;font-size:22px;color:#e6e6e6;font-weight:normal">0.73</div><div class="abs" style="left:2080px;top:1514px;height:30px;line-height:30px;font-size:22px;color:#e6e6e6;font-weight:normal">Ratio</div><div class="abs" style="left:1622px;top:1548px;width:550px;height:2px;background:#e6e6e6"></div><div class="abs" style="left:1622px;top:1550px;width:2px;height:38px;background:#e6e6e6"></div><div class="abs" style="left:1908px;top:1550px;width:2px;height:38px;background:#e6e6e6"></div><div class="abs" style="left:2065px;top:1550px;width:2px;height:38px;background:#e6e6e6"></div><div class="abs" style="left:2170px;top:1550px;width:2px;height:38px;background:#e6e6e6"></div><div class="abs" style="left:1636px;top:1554px;height:30px;line-height:30px;font-size:22px;color:#e6e6e6;font-weight:normal">PF Sensitivity (top 5%)</div><div class="abs" style="left:1922px;top:1554px;height:30px;line-height:30px;font-size:22px;color:#e6e6e6;font-weight:normal">22.31</div><div class="abs" style="left:2080px;top:1554px;height:30px;line-height:30px;font-size:22px;color:#e6e6e6;font-weight:normal">% drop</div><div class="abs" style="left:1622px;top:1588px;width:550px;height:2px;background:#e6e6e6"></div><div class="abs" style="left:1622px;top:1590px;width:2px;height:38px;background:#e6e6e6"></div><div class="abs" style="left:1908px;top:1590px;width:2px;height:38px;background:#e6e6e6"></div><div class="abs" style="left:2065px;top:1590px;width:2px;height:38px;background:#e6e6e6"></div><div class="abs" style="left:2170px;top:1590px;width:2px;height:38px;background:#e6e6e6"></div><div class="abs" style="left:1636px;top:1594px;height:30px;line-height:30px;font-size:22px;color:#e6e6e6;font-weight:normal">Exp Sensitivity (top 5%)</div><div class="abs" style="left:1922px;top:1594px;height:30px;line-height:30px;font-size:22px;color:#e6e6e6;font-weight:normal">130.07</div><div class="abs" style="left:2080px;top:1594px;height:30px;line-height:30px;font-size:22px;color:#e6e6e6;font-weight:normal">% drop</div><div class="abs" style="left:1622px;top:1628px;width:550px;height:2px;background:#e6e6e6"></div><div class="abs" style="left:1622px;top:1630px;width:2px;height:38px;background:#e6e6e6"></div><div class="abs" style="left:1908px;top:1630px;width:2px;height:38px;background:#e6e6e6"></div><div class="abs" style="left:2065px;top:1630px;width:2px;height:38px;background:#e6e6e6"></div><div class="abs" style="left:2170px;top:1630px;width:2px;height:38px;background:#e6e6e6"></div><div class="abs" style="left:1636px;top:1634px;height:30px;line-height:30px;font-size:22px;color:#e6e6e6;font-weight:normal">Significance Z-score</div><div class="abs" style="left:1922px;top:1634px;height:30px;line-height:30px;font-size:22px;color:#e6e6e6;font-weight:normal">5.44</div><div class="abs" style="left:2080px;top:1634px;height:30px;line-height:30px;font-size:22px;color:#e6e6e6;font-weight:normal">σ</div><div class="abs" style="left:1622px;top:1668px;width:550px;height:2px;background:#e6e6e6"></div>
</div></body></html>
